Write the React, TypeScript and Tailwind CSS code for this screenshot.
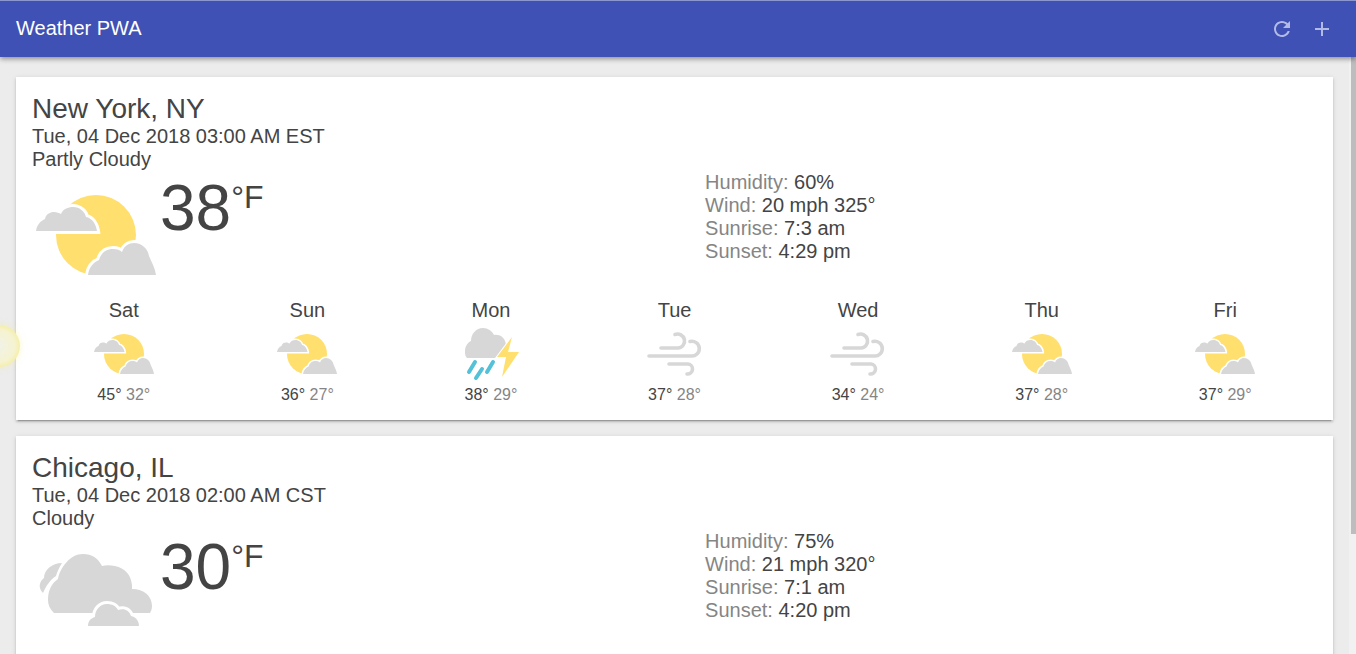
import React from "react";

const CLOUD = "#d7d7d7";
const SUN = "#ffdf6e";
const RAIN = "#54c1d8";

function PartlyCloudy() {
  return (
    <svg viewBox="0 0 128 128" className="w-full h-full block">
      <circle cx="64" cy="64" r="40" fill={SUN} />
      <path
        d="M4 60C5 53 9 50 13 48C14 43 18 41 22 41C25 41 27 42 29 43C31 38 36 36 41 36C48 36 53 41 54 46C60 47 64 53 65 60Z"
        fill={CLOUD}
        stroke="#fff"
        strokeWidth="6"
        paintOrder="stroke"
        strokeLinejoin="miter"
      />
      <path
        d="M56 104C57 96 62 91 67 89C69 82 74 78 81 78C85 78 88 79 90 81C92 75 97 72 102 72C110 72 116 78 117 85C120 92 123 97 124 104Z"
        fill={CLOUD}
        stroke="#fff"
        strokeWidth="6"
        paintOrder="stroke"
      />
    </svg>
  );
}

function Cloudy() {
  return (
    <svg viewBox="0 0 128 128" className="w-full h-full block">
      <path d="M11 63C6 58 7 52 12 48C12 40 20 33 30 33C27 38 25 42 24 46C18 50 14 56 11 63Z" fill={CLOUD} />
      <path
        d="M22 83C18 79 16 75 16 70C16 60 20 53 26 49C28 38 38 24 51 24C60 24 66 28 70 36C74 35 78 35 83 36C93 38 99 45 100 55C100 57 100 58 100 59C112 59 120 66 120 76C120 79 119 81 118 83Z"
        fill={CLOUD}
      />
      <path
        d="M56 96C56 91 59 88 63 87C63 80 68 74 75 74C80 74 84 76 86 80C92 78 97 80 99 86C104 87 107 91 107 96Z"
        fill={CLOUD}
        stroke="#fff"
        strokeWidth="6"
        paintOrder="stroke"
      />
    </svg>
  );
}

function Storm() {
  return (
    <svg viewBox="0 0 64 64" className="w-full h-full block">
      <path
        d="M8 36C6 34 6 32 6 29C6 25 8 21 12 19C12 12 17 6 24 6C29 6 33 9 35 13C42 12 47 17 47 24C47 28 44 33 40 36Z"
        fill={CLOUD}
      />
      <path d="M53 15L38 35H47L43 55L60 30H49Z" fill={SUN} stroke="#fff" strokeWidth="2" paintOrder="stroke" />
      <g stroke={RAIN} strokeWidth="4" strokeLinecap="round">
        <path d="M16 40L10 50" />
        <path d="M23 47L17 56" />
        <path d="M34 40L28 50" />
      </g>
    </svg>
  );
}

function Wind() {
  return (
    <svg viewBox="0 0 64 64" className="w-full h-full block" fill="none" stroke={CLOUD} strokeWidth="3.6" strokeLinecap="round">
      <path d="M18 26H35A7 7 0 1 0 32 12.5" />
      <path d="M6 34H48A7.4 7.4 0 1 0 47 19.5" />
      <path d="M26 42H45A5 5 0 0 1 44 52" />
    </svg>
  );
}

const ICONS = { partly: PartlyCloudy, cloudy: Cloudy, storm: Storm, wind: Wind };
type IconName = keyof typeof ICONS;

const forecast: { day: string; icon: IconName; hi: number; lo: number }[] = [
  { day: "Sat", icon: "partly", hi: 45, lo: 32 },
  { day: "Sun", icon: "partly", hi: 36, lo: 27 },
  { day: "Mon", icon: "storm", hi: 38, lo: 29 },
  { day: "Tue", icon: "wind", hi: 37, lo: 28 },
  { day: "Wed", icon: "wind", hi: 34, lo: 24 },
  { day: "Thu", icon: "partly", hi: 37, lo: 28 },
  { day: "Fri", icon: "partly", hi: 37, lo: 29 },
];

function Stat({ label, value }: { label: string; value: string }) {
  return (
    <div>
      <span className="text-[#858585]">{label}:</span> {value}
    </div>
  );
}

function Current(props: {
  icon: IconName;
  temp: number;
  humidity: string;
  wind: string;
  sunrise: string;
  sunset: string;
}) {
  const Icon = ICONS[props.icon];
  return (
    <div className="flex">
      <div className="flex grow">
        <div className="w-[128px] h-[128px] shrink-0">
          <Icon />
        </div>
        <div className="text-[64px]">
          {props.temp}
          <span className="text-[32px] align-super">°F</span>
        </div>
      </div>
      <div className="grow text-[20px]">
        <Stat label="Humidity" value={props.humidity} />
        <Stat label="Wind" value={props.wind} />
        <Stat label="Sunrise" value={props.sunrise} />
        <Stat label="Sunset" value={props.sunset} />
      </div>
    </div>
  );
}

export default function App() {
  return (
    <div className="relative h-[654px] overflow-hidden flex flex-col text-[#444] text-[16px] leading-[normal] font-['Liberation_Sans',Arial,sans-serif]">
      <header className="relative z-10 h-[57px] shrink-0 flex items-center justify-between pl-4 pr-[14px] bg-[#3f51b5] border-t border-[#8c97d2] shadow-[0_2px_5px_rgba(0,0,0,0.4)]">
        <h1 className="text-[20px] text-white font-normal pb-[2px]">Weather PWA</h1>
        <div className="flex">
          <button className="w-10 h-10 flex items-center justify-center">
            <svg viewBox="0 0 24 24" className="w-6 h-6" fill="#b2bae6">
              <path d="M17.65 6.35C16.2 4.9 14.21 4 12 4c-4.42 0-7.99 3.58-7.99 8s3.57 8 7.99 8c3.73 0 6.84-2.55 7.73-6h-2.08c-.82 2.33-3.04 4-5.65 4-3.31 0-6-2.69-6-6s2.69-6 6-6c1.66 0 3.14.69 4.22 1.78L13 11h7V4l-2.35 2.35z" />
            </svg>
          </button>
          <button className="w-10 h-10 flex items-center justify-center">
            <svg viewBox="0 0 24 24" className="w-6 h-6" fill="#b2bae6">
              <path d="M19 13h-6v6h-2v-6H5v-2h6V5h2v6h6v2z" />
            </svg>
          </button>
        </div>
      </header>

      <div className="flex flex-1 min-h-0">
        <main className="flex-1 min-w-0 bg-[#ececec] px-4 pt-5 overflow-hidden">
          <section className="bg-white p-4 mb-4 shadow-[0_2px_2px_0_rgba(0,0,0,0.14),0_3px_1px_-2px_rgba(0,0,0,0.2),0_1px_5px_0_rgba(0,0,0,0.12)]">
            <div className="text-[28px]">New York, NY</div>
            <div className="text-[20px]">Tue, 04 Dec 2018 03:00 AM EST</div>
            <div className="text-[20px]">Partly Cloudy</div>
            <Current icon="partly" temp={38} humidity="60%" wind="20 mph 325°" sunrise="7:3 am" sunset="4:29 pm" />
            <div className="flex">
              {forecast.map((d) => {
                const Icon = ICONS[d.icon];
                return (
                  <div key={d.day} className="flex-1 text-center">
                    <div className="text-[20px]">{d.day}</div>
                    <div className="w-16 h-16 mx-auto">
                      <Icon />
                    </div>
                    <div>
                      {d.hi}° <span className="text-[#858585]">{d.lo}°</span>
                    </div>
                  </div>
                );
              })}
            </div>
          </section>
          <section className="bg-white p-4 h-[343px] shadow-[0_2px_2px_0_rgba(0,0,0,0.14),0_3px_1px_-2px_rgba(0,0,0,0.2),0_1px_5px_0_rgba(0,0,0,0.12)]">
            <div className="text-[28px]">Chicago, IL</div>
            <div className="text-[20px]">Tue, 04 Dec 2018 02:00 AM CST</div>
            <div className="text-[20px]">Cloudy</div>
            <Current icon="cloudy" temp={30} humidity="75%" wind="21 mph 320°" sunrise="7:1 am" sunset="4:20 pm" />
          </section>
        </main>
        <aside className="w-[7px] shrink-0 bg-[#f1f1f1] pl-[2px]">
          <div className="h-[477px] bg-[#bdbdbd]" />
        </aside>
      </div>

      <div className="absolute left-[-22px] top-[325px] w-[42px] h-[42px] rounded-full bg-[radial-gradient(circle,#f2f2e8_0%,#f5f3cf_55%,#f5e97e_90%,#f9ef9c_100%)] shadow-[0_0_6px_rgba(250,240,150,0.5)]" />
    </div>
  );
}
